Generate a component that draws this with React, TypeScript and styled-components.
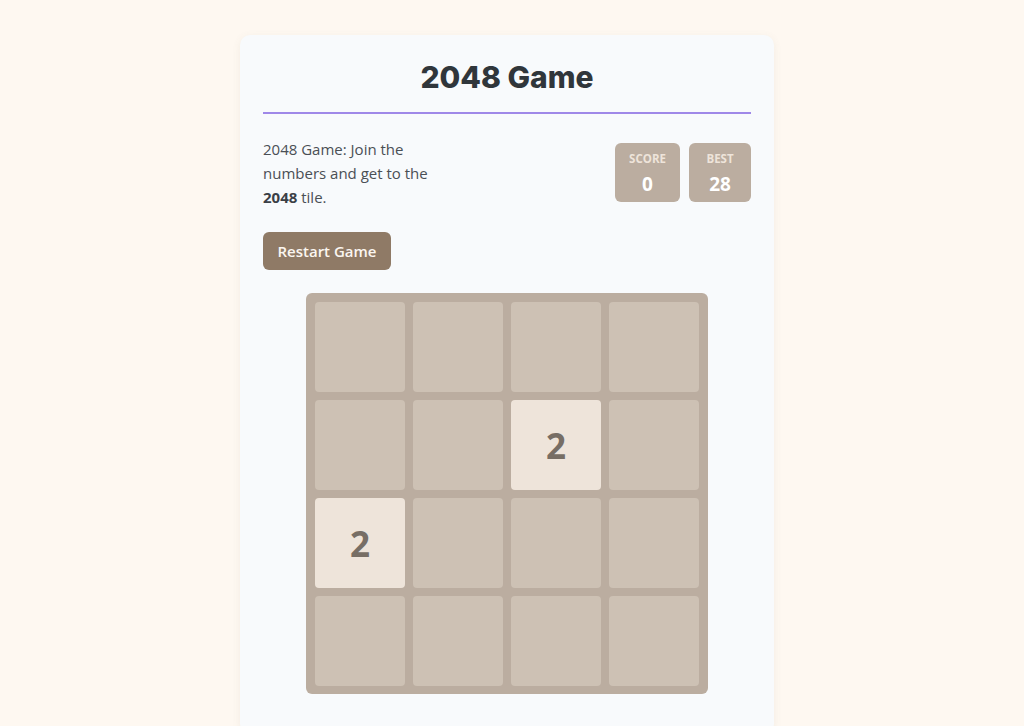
import React from "react";
import styled, { createGlobalStyle } from "styled-components";

const Global = createGlobalStyle`
  html, body { margin: 0; padding: 0; }
  body {
    background: #fef8f1;
    font-family: "Open Sans", "Noto Sans", sans-serif;
    overflow: hidden;
  }
`;

const Page = styled.div`
  display: flex;
  justify-content: center;
  padding: 35px 10px 0 0;
  min-height: 726px;
  box-sizing: border-box;
`;

const Card = styled.div`
  width: 534px;
  box-sizing: border-box;
  background: #f8fafc;
  border-radius: 10px;
  box-shadow: 0 2px 8px rgba(120, 100, 80, 0.08);
  padding: 22px 23px 40px;
`;

const Title = styled.h1`
  margin: 0;
  text-align: center;
  font-family: Inter, "Liberation Sans", sans-serif;
  font-weight: 800;
  font-size: 30px;
  line-height: 40px;
  color: #30363b;
  padding-bottom: 15px;
  border-bottom: 2px solid #9f88e8;
`;

const InfoRow = styled.div`
  display: flex;
  justify-content: space-between;
  align-items: flex-start;
  margin-top: 23px;
`;

const Intro = styled.p`
  margin: 0;
  width: 180px;
  font-size: 15px;
  line-height: 24px;
  color: #4a4f55;
  strong { font-weight: 700; color: #3b4046; }
`;

const Scores = styled.div`
  display: flex;
  gap: 9px;
  margin-top: 6px;
`;

const ScoreBox = styled.div<{ $w: number }>`
  width: ${(p) => p.$w}px;
  height: 59px;
  box-sizing: border-box;
  background: #bbada0;
  border-radius: 6px;
  display: flex;
  flex-direction: column;
  align-items: center;
  padding-top: 8px;
`;

const ScoreLabel = styled.div`
  font-size: 11.5px;
  font-weight: 700;
  color: #eee4da;
  line-height: 16px;
`;

const ScoreValue = styled.div`
  font-size: 19px;
  font-weight: 700;
  color: #ffffff;
  line-height: 26px;
  margin-top: 4px;
`;

const RestartButton = styled.button`
  margin-top: 23px;
  width: 128px;
  height: 38px;
  border: none;
  border-radius: 6px;
  background: #8f7a66;
  color: #fbf6f0;
  font-family: "Open Sans", "Noto Sans", sans-serif;
  font-size: 15px;
  font-weight: 600;
  cursor: pointer;
`;

const BoardWrap = styled.div`
  display: flex;
  justify-content: center;
  margin-top: 23px;
`;

const Board = styled.div`
  width: 402px;
  height: 401px;
  box-sizing: border-box;
  background: #bbada0;
  border-radius: 6px;
  padding: 9px;
  display: grid;
  grid-template-columns: repeat(4, 90px);
  grid-template-rows: repeat(4, 90px);
  column-gap: 8px;
  row-gap: 8px;
`;

const Tile = styled.div<{ $value: number }>`
  border-radius: 4px;
  background: ${(p) => (p.$value ? "#eee4da" : "#cdc1b4")};
  display: flex;
  align-items: center;
  justify-content: center;
  font-family: "Open Sans", "Noto Sans", sans-serif;
  font-size: 35px;
  font-weight: 700;
  color: #776e65;
`;

const cells = [
  0, 0, 0, 0,
  0, 0, 2, 0,
  2, 0, 0, 0,
  0, 0, 0, 0,
];

export default function App() {
  return (
    <>
      <Global />
      <Page>
        <Card>
          <Title>2048 Game</Title>
          <InfoRow>
            <Intro>
              2048 Game: Join the numbers and get to the <strong>2048</strong> tile.
            </Intro>
            <Scores>
              <ScoreBox $w={65}>
                <ScoreLabel>SCORE</ScoreLabel>
                <ScoreValue>0</ScoreValue>
              </ScoreBox>
              <ScoreBox $w={62}>
                <ScoreLabel>BEST</ScoreLabel>
                <ScoreValue>28</ScoreValue>
              </ScoreBox>
            </Scores>
          </InfoRow>
          <RestartButton>Restart Game</RestartButton>
          <BoardWrap>
            <Board>
              {cells.map((v, i) => (
                <Tile key={i} $value={v}>
                  {v ? v : ""}
                </Tile>
              ))}
            </Board>
          </BoardWrap>
        </Card>
      </Page>
    </>
  );
}
